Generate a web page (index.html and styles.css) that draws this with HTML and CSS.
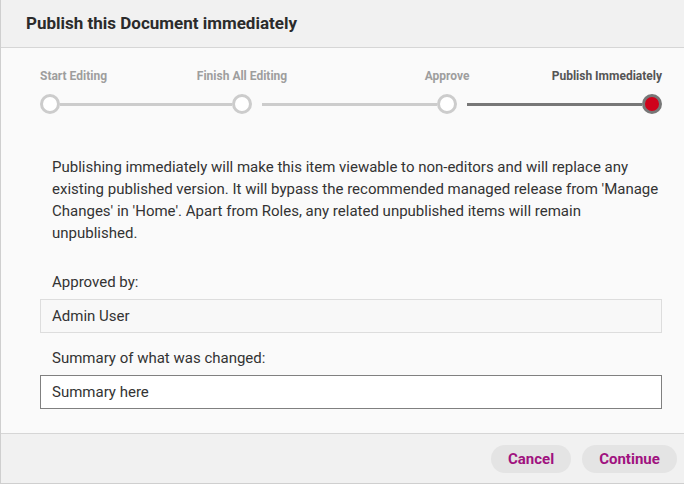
FILE: index.html
```html
<!DOCTYPE html>
<html>
<head>
<meta charset="utf-8">
<link rel="stylesheet" href="styles.css">
</head>
<body>
<div class="dialog">
  <header class="dlg-header">
    <h1 class="dlg-title">Publish this Document immediately</h1>
  </header>
  <main class="dlg-body">
    <div class="stepper">
      <span class="step-label col1 start">Start Editing</span>
      <span class="step-label col3">Finish All Editing</span>
      <span class="step-label col6">Approve</span>
      <span class="step-label col9 end active">Publish Immediately</span>

      <span class="node col1"></span>
      <span class="line col2"></span>
      <span class="node col3"></span>
      <span class="line col5"></span>
      <span class="node col6"></span>
      <span class="line col8 done"></span>
      <span class="node col9 current"></span>
    </div>

    <p class="intro">Publishing immediately will make this item viewable to non-editors and will replace any existing published version. It will bypass the recommended managed release from 'Manage Changes' in 'Home'. Apart from Roles, any related unpublished items will remain unpublished.</p>

    <div class="field">
      <label class="field-label">Approved by:</label>
      <div class="readonly-box">Admin User</div>
    </div>
    <div class="field">
      <label class="field-label">Summary of what was changed:</label>
      <div class="text-input">Summary here</div>
    </div>
  </main>
  <footer class="dlg-footer">
    <button class="btn">Cancel</button>
    <button class="btn">Continue</button>
  </footer>
</div>
</body>
</html>
```
FILE: styles.css
```css
* { box-sizing: border-box; }
html, body { margin: 0; padding: 0; }
body {
  font-family: Roboto, "Liberation Sans", sans-serif;
  background: #ffffff;
  width: 684px;
  height: 485px;
  overflow: hidden;
}
.dialog {
  width: 700px;
  height: 484px;
  border-left: 1px solid #cfcfcf;
  border-bottom: 1px solid #cfcfcf;
  display: flex;
  flex-direction: column;
  background: #fafafa;
}
.dlg-header {
  height: 48px;
  background: #f1f1f1;
  border-bottom: 1px solid #d6d6d6;
  display: flex;
  align-items: center;
  padding-left: 25px;
}
.dlg-title {
  margin: 0;
  font-size: 17px;
  font-weight: 700;
  color: #2b2b2b;
  position: relative;
  top: -1px;
}
.dlg-body {
  flex: 1;
  padding: 21px 0 0 39px;
  width: 661px;
}
.stepper {
  display: grid;
  grid-template-columns: 20px 172fr 20px 10px 175fr 20px 10px 175fr 20px;
  grid-template-rows: 14px 20px;
  row-gap: 11px;
  width: 622px;
}
.step-label {
  grid-row: 1;
  justify-self: center;
  white-space: nowrap;
  font-size: 12px;
  line-height: 14px;
  font-weight: 700;
  color: #9e9e9e;
}
.step-label.start { justify-self: start; }
.step-label.end { justify-self: end; }
.step-label.active { color: #555555; }
.col1 { grid-column: 1; }
.col2 { grid-column: 2; }
.col3 { grid-column: 3; }
.col5 { grid-column: 5; }
.col6 { grid-column: 6; }
.col8 { grid-column: 8; }
.col9 { grid-column: 9; }
.node {
  grid-row: 2;
  width: 20px;
  height: 20px;
  border-radius: 50%;
  border: 3px solid #cccccc;
  background: #ffffff;
}
.node.current {
  background: #d0021b;
  border-color: #777777;
}
.line {
  grid-row: 2;
  align-self: center;
  height: 3px;
  background: #cccccc;
}
.line.done { background: #777777; }
.intro {
  margin: 42px 0 0 12px;
  width: 612px;
  font-size: 15px;
  line-height: 22px;
  color: #333333;
}
.field { margin-top: 27px; }
.field + .field { margin-top: 14px; }
.field-label {
  display: block;
  padding-left: 12px;
  font-size: 15px;
  line-height: 22px;
  color: #333333;
  margin-bottom: 6px;
}
.readonly-box, .text-input {
  width: 622px;
  height: 34px;
  padding: 0 11px;
  display: flex;
  align-items: center;
  font-size: 15px;
  color: #333333;
}
.readonly-box {
  background: #f8f8f8;
  border: 1px solid #dddddd;
}
.text-input {
  background: #ffffff;
  border: 1px solid #808080;
}
.dlg-footer {
  height: 50px;
  border-top: 1px solid #d6d6d6;
  background: #f1f1f1;
  display: flex;
  align-items: center;
  gap: 11px;
  padding-left: 490px;
}
.btn {
  font-family: Roboto, "Liberation Sans", sans-serif;
  font-size: 15px;
  font-weight: 700;
  color: #a0127f;
  background: #e4e4e4;
  border: none;
  border-radius: 14px;
  height: 28px;
  padding: 0 17px;
}
```
